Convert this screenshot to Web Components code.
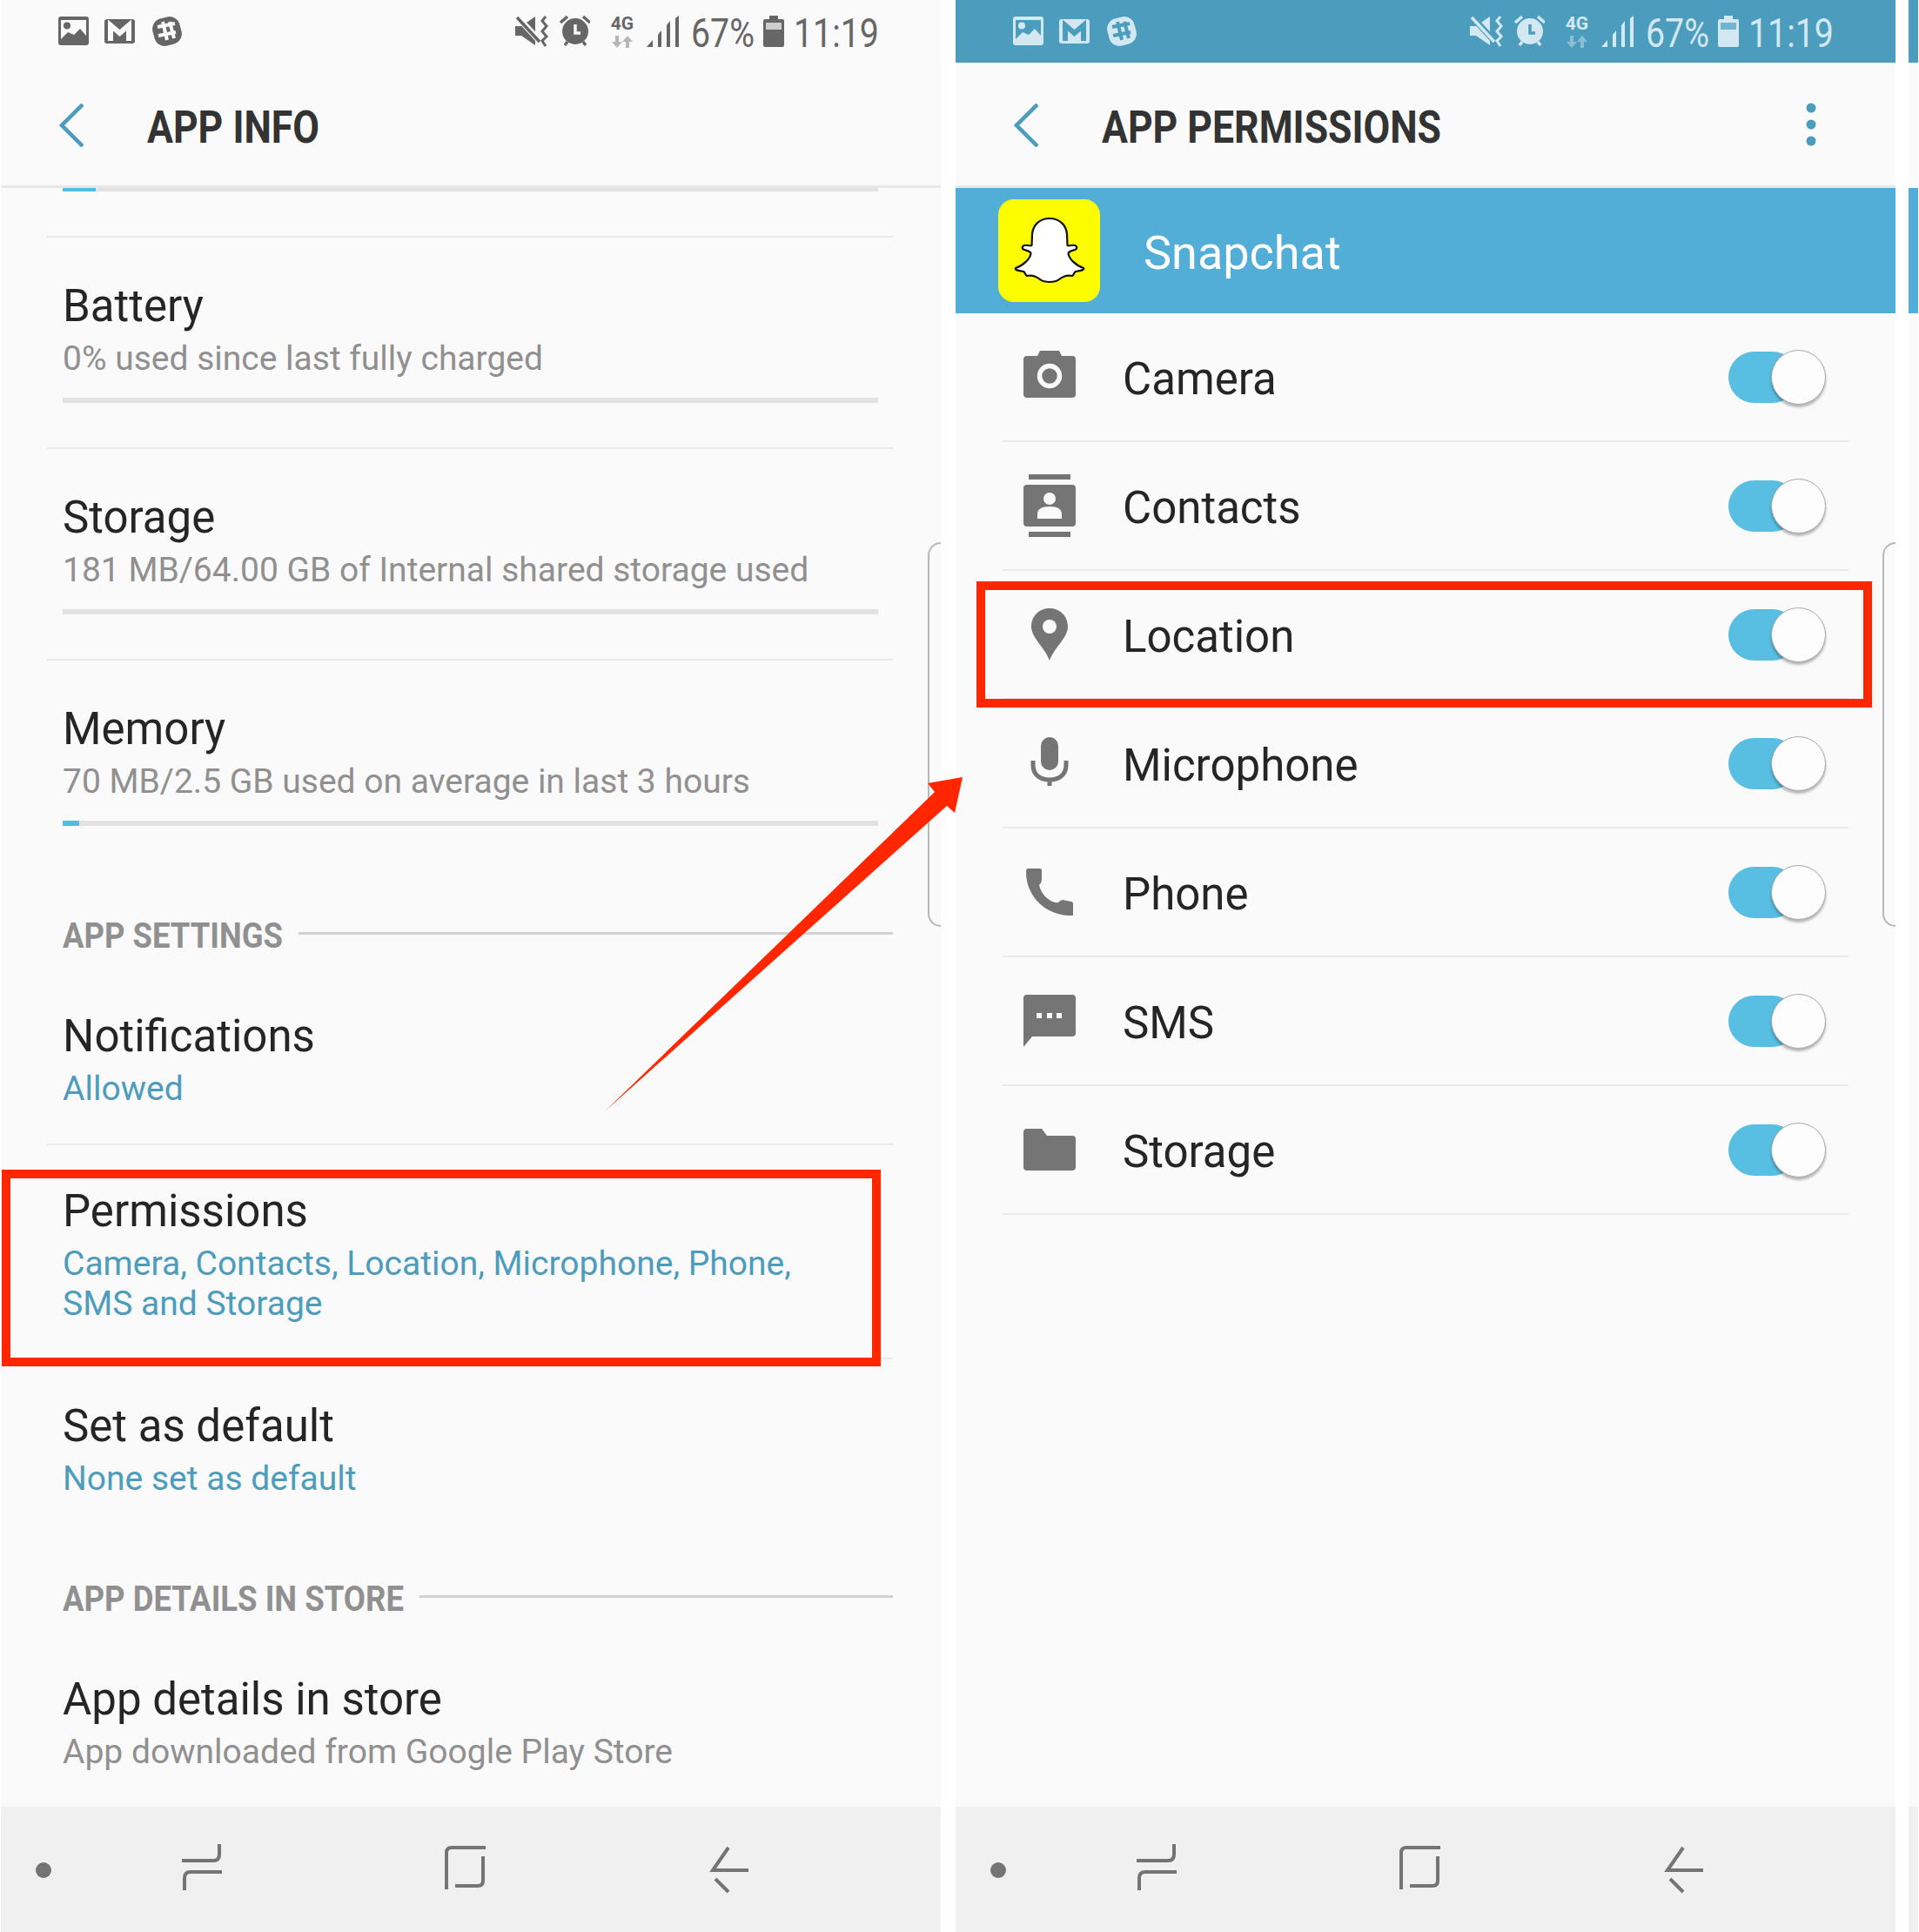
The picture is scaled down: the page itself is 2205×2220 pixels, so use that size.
<!DOCTYPE html>
<html>
<head>
<meta charset="utf-8">
<title>App info</title>
<style>
  html, body { margin: 0; padding: 0; background: #fff; }
  body { width: 2205px; height: 2220px; position: relative; overflow: hidden; font-family: Roboto, "Liberation Sans", sans-serif; }
  .page { display: flex; height: 2220px; }
</style>
</head>
<body>
<div class="page">
  <phone-panel style="margin-left:1px">
    <status-bar slot="status"></status-bar>
    <app-bar slot="bar" label="APP INFO" w="198"></app-bar>
    <setting-row progress="38" pt="0" pb="51" divider></setting-row>
    <setting-row label="Battery" sub="0% used since last fully charged" progress="0" divider></setting-row>
    <setting-row label="Storage" sub="181 MB/64.00 GB of Internal shared storage used" progress="0" divider></setting-row>
    <setting-row label="Memory" sub="70 MB/2.5 GB used on average in last 3 hours" progress="19" pb="101"></setting-row>
    <section-label w="253">APP SETTINGS</section-label>
    <setting-row label="Notifications" sub="Allowed" tone="blue" pt="61" pb="40" divider></setting-row>
    <setting-row label="Permissions" tone="blue" pt="46" pb="39" divider>Camera, Contacts, Location, Microphone, Phone,<br>SMS and Storage</setting-row>
    <setting-row label="Set as default" sub="None set as default" tone="blue" pt="47" pb="90"></setting-row>
    <section-label w="392">APP DETAILS IN STORE</section-label>
    <setting-row label="App details in store" sub="App downloaded from Google Play Store" pt="61" pb="0"></setting-row>
    <nav-bar slot="nav"></nav-bar>
    <edge-handle slot="over"></edge-handle>
  </phone-panel>
  <phone-panel style="margin-left:17px">
    <status-bar slot="status" tone="blue"></status-bar>
    <app-bar slot="bar" label="APP PERMISSIONS" w="390" menu></app-bar>
    <app-header label="Snapchat"></app-header>
    <perm-row icon="camera" label="Camera"></perm-row>
    <perm-row icon="contacts" label="Contacts"></perm-row>
    <perm-row icon="location" label="Location"></perm-row>
    <perm-row icon="mic" label="Microphone"></perm-row>
    <perm-row icon="phone" label="Phone"></perm-row>
    <perm-row icon="sms" label="SMS"></perm-row>
    <perm-row icon="storage" label="Storage"></perm-row>
    <nav-bar slot="nav"></nav-bar>
    <edge-handle slot="over"></edge-handle>
  </phone-panel>
  <peek-strip></peek-strip>
</div>
<red-box x="2" y="1344" w="1010" h="226"></red-box>
<red-box x="1122" y="668" w="1029" h="145"></red-box>
<call-arrow></call-arrow>

<script>
// squeezes a single line of text to a given width (the phone font is condensed)
class FitText extends HTMLElement {
  constructor() {
    super();
    this.attachShadow({ mode: "open" });
    this.shadowRoot.innerHTML = `
      <style>
        :host { display: inline-block; white-space: nowrap; }
        span { display: inline-block; transform-origin: 0 50%; }
      </style>
      <span><slot></slot></span>`;
  }

  connectedCallback() {
    const w = Number(this.getAttribute("w"));
    const span = this.shadowRoot.querySelector("span");
    this.style.width = w + "px";
    const natural = span.getBoundingClientRect().width;
    if (natural > 0) span.style.transform = `scaleX(${w / natural})`;
  }
}

class PhonePanel extends HTMLElement {
  constructor() {
    super();
    this.attachShadow({ mode: "open" });
    this.shadowRoot.innerHTML = `
      <style>
        :host { display: flex; flex-direction: column; width: 1080px; height: 2220px; background: #fafafa; position: relative; flex: none; }
        .body { flex: 1; display: flex; flex-direction: column; min-height: 0; }
      </style>
      <slot name="status"></slot>
      <slot name="bar"></slot>
      <div class="body"><slot></slot></div>
      <slot name="nav"></slot>
      <slot name="over"></slot>`;
  }
}

class StatusBar extends HTMLElement {
  constructor() {
    super();
    this.attachShadow({ mode: "open" });
    this.shadowRoot.innerHTML = `
      <style>
        :host { display: flex; height: 72px; color: #666; --sb: #fafafa; background: var(--sb); padding: 0 71px 0 66px; align-items: flex-start; }
        :host([tone="blue"]) { color: #d3e8f1; --sb: #4c9dbd; }
        svg { display: block; height: 72px; flex: none; fill: currentColor; }
        .right { margin-left: auto; display: flex; }
        .pct, .time { font: 400 46px/72px Roboto, sans-serif; height: 72px; margin-top: 2px; }
        .net { width: 28px; height: 72px; position: relative; margin: 0 14px 0 23px; flex: none; }
        .net b { display: block; font: 700 21px/21px Roboto, sans-serif; padding-top: 17px; text-align: center; }
      </style>
      <svg width="36" viewBox="0 0 36 72" style="margin-right:17px">
        <rect x="0" y="19" width="35" height="33" rx="3"/>
        <path d="M3 23H32V41L25 33L18 40L11 37L3 45Z" style="fill:var(--sb)"/>
        <circle cx="10" cy="29.500" r="4"/>
      </svg>
      <svg width="36" viewBox="0 0 36 72" style="margin-right:17px">
        <rect x="0" y="22" width="35" height="28" rx="3"/>
        <path d="M7 47V29L17.500 38L28 29V47" style="fill:none;stroke:var(--sb);stroke-width:6"/>
      </svg>
      <svg width="38" viewBox="0 0 38 72">
        <rect x="3" y="20" width="32" height="32" rx="12" transform="rotate(-15 19 36)"/>
        <path d="M15 25L20 46M23 25L28 44M9 31L29 27M10 41L30 37" transform="translate(-1 0)" style="fill:none;stroke:var(--sb);stroke-width:4"/>
      </svg>
      <div class="right">
        <svg width="38" viewBox="0 0 38 72" style="margin-right:12px">
          <path d="M0 30H7L23 19V52L7 41H0Z"/>
          <path d="M2 19L28 47" style="fill:none;stroke:var(--sb);stroke-width:7"/>
          <path d="M2 20L28 48" style="fill:none;stroke:currentColor;stroke-width:3.500"/>
          <path d="M35 19L31 24L36 30L31 36L36 42L31 47L35 53" style="fill:none;stroke:currentColor;stroke-width:3"/>
        </svg>
        <svg width="36" viewBox="0 0 36 72">
          <circle cx="19" cy="36" r="15"/>
          <path d="M2 26L10 19M36 26L28 19M7 52L10 48M31 52L28 48" style="fill:none;stroke:currentColor;stroke-width:3.500"/>
          <path d="M19 28V38H25" style="fill:none;stroke:var(--sb);stroke-width:3.500"/>
        </svg>
        <div class="net"><b>4G</b>
          <svg width="28" height="14" viewBox="0 0 28 14" style="position:absolute;left:0;top:41px;height:14px;opacity:.45">
            <path d="M6 0H10V7H14L8 14L2 7H6ZM18 14H22V7H26L20 0L14 7H18Z"/>
          </svg>
        </div>
        <svg width="37" viewBox="0 0 37 72" style="margin-right:14px">
          <path d="M0 54L7 46V54ZM13 40L17 35V54H13ZM23 29L27 24V54H23ZM33 21L37 18V54H33Z"/>
        </svg>
        <fit-text class="pct" w="73">67%</fit-text>
        <svg width="24" viewBox="0 0 24 72" style="margin:0 11px 0 10px">
          <path d="M7 18H17V22H22Q24 22 24 24V52Q24 54 22 54H2Q0 54 0 52V24Q0 22 2 22H7Z"/>
          <rect x="3" y="26" width="18" height="8" style="fill:var(--sb);opacity:.7"/>
        </svg>
        <fit-text class="time" w="98">11:19</fit-text>
      </div>`;
  }
}

class AppBar extends HTMLElement {
  constructor() {
    super();
    this.attachShadow({ mode: "open" });
  }

  connectedCallback() {
    const menu = this.hasAttribute("menu") ? `
      <svg class="menu" width="14" height="52" viewBox="0 0 14 52">
        <circle cx="7" cy="6" r="5.500"/><circle cx="7" cy="25" r="5.500"/><circle cx="7" cy="44" r="5.500"/>
      </svg>` : "";
    this.shadowRoot.innerHTML = `
      <style>
        :host { display: flex; align-items: center; height: 141px; padding-left: 67px; padding-right: 90px; border-bottom: 3px solid #e8e8e8; background: #fafafa; color: #333; }
        svg { flex: none; display: block; }
        .back { fill: none; stroke: #4c9dbd; stroke-width: 4.500; margin-right: 73px; margin-top: 2px; }
        .title { font: 700 51px/60px Roboto, sans-serif; margin-top: 8px; }
        .menu { margin-left: auto; fill: #4c9dbd; margin-top: 3px; }
      </style>
      <svg class="back" width="28" height="50" viewBox="0 0 28 50"><path d="M27 1L3 25L27 49"/></svg>
      <fit-text class="title" w="${this.getAttribute("w")}">${this.getAttribute("label")}</fit-text>
      ${menu}`;
  }
}

class SettingRow extends HTMLElement {
  constructor() {
    super();
    this.attachShadow({ mode: "open" });
  }

  connectedCallback() {
    const label = this.getAttribute("label");
    const sub = this.getAttribute("sub");
    const progress = this.getAttribute("progress");
    const pt = this.getAttribute("pt") || 49;
    const pb = this.getAttribute("pb") || 51;
    this.shadowRoot.innerHTML = `
      <style>
        :host { display: block; margin: 0 55px 0 53px; padding: ${pt}px 17px ${pb}px 18px; flex: none; }
        :host([divider]) { border-bottom: 2px solid #e9e9e9; }
        .t { font: 400 51px/60px Roboto, sans-serif; color: #252525; }
        .s { font: 400 39px/46px Roboto, sans-serif; color: #909090; margin-top: 7px; }
        :host([tone="blue"]) .s { color: #4c9dbd; }
        .bar { height: 6px; background: #e2e2e2; margin-top: 22px; }
        .bar.only { margin-top: 0; height: 4px; }
        .bar i { display: block; height: 100%; background: #53bde1; }
      </style>
      ${label ? `<div class="t">${label}</div>` : ""}
      ${label ? `<div class="s">${sub || "<slot></slot>"}</div>` : ""}
      ${progress !== null ? `<div class="bar ${label ? "" : "only"}"><i style="width:${progress}px"></i></div>` : ""}`;
  }
}

class SectionLabel extends HTMLElement {
  constructor() {
    super();
    this.attachShadow({ mode: "open" });
  }

  connectedCallback() {
    this.shadowRoot.innerHTML = `
      <style>
        :host { display: flex; align-items: center; height: 50px; margin: 0 55px 0 53px; padding-left: 18px; flex: none; color: #909090; }
        fit-text { font: 700 40px/50px Roboto, sans-serif; flex: none; margin-top: 2px; }
        div { flex: 1; height: 3px; background: #d2d2d2; margin: 0 0 5px 18px; }
      </style>
      <fit-text w="${this.getAttribute("w")}"><slot></slot></fit-text>
      <div></div>`;
  }
}

class AppHeader extends HTMLElement {
  constructor() {
    super();
    this.attachShadow({ mode: "open" });
  }

  connectedCallback() {
    this.shadowRoot.innerHTML = `
      <style>
        :host { display: flex; align-items: center; height: 144px; background: #52aed6; padding-left: 49px; flex: none; }
        .tile { width: 117px; height: 118px; border-radius: 18px; background: #fdfd00; flex: none; }
        svg { display: block; }
        span { font: 400 54px/64px Roboto, sans-serif; color: #fff; margin-left: 50px; margin-top: 6px; }
      </style>
      <div class="tile">
        <svg width="117" height="118" viewBox="7 4 117 118">
          <path fill="#fff" stroke="#111" stroke-width="2.200" stroke-linejoin="round"
            d="M66 26C55 26 47 33 46 44L45.500 57C43 58 40 56 37 57C34 58 34 61 37 62C40 63 44 64 44.500 66C44 72 36 80 27 83C26 85 29 86 36 87C38 88 38 91 40 92C44 91 50 92 55 96C60 100 72 100 77 96C82 92 88 91 92 92C94 91 94 88 96 87C103 86 106 85 105 83C96 80 88 72 87.500 66C88 64 92 63 95 62C98 61 98 58 95 57C92 56 89 58 86.500 57L86 44C85 33 77 26 66 26Z"/>
        </svg>
      </div>
      <span>${this.getAttribute("label")}</span>`;
  }
}

const PERM_ICONS = {
  camera: `<path d="M10 12H22L25 6H47L50 12H62Q66 12 66 16V56Q66 60 62 60H10Q6 60 6 56V16Q6 12 10 12Z"/>
    <circle cx="36" cy="35" r="11.500" fill="none" stroke="#fafafa" stroke-width="5.500"/>`,
  contacts: `<rect x="12" y="0" width="48" height="6"/><rect x="12" y="66" width="48" height="6"/>
    <rect x="6" y="12" width="60" height="48" rx="4"/>
    <circle cx="36" cy="28" r="7" fill="#fafafa"/>
    <path d="M22 51V46Q22 37 36 37Q50 37 50 46V51Z" fill="#fafafa"/>`,
  location: `<path d="M36 66C30 50 15 40 15 27C15 14 25 6 36 6C47 6 57 14 57 27C57 40 42 50 36 66Z"/>
    <circle cx="36" cy="27" r="8" fill="#fafafa"/>`,
  mic: `<rect x="26" y="6" width="20" height="38" rx="10"/>
    <path d="M17 33V38C17 50 26 55 36 55C46 55 55 50 55 38V33M36 55V62" fill="none" stroke="#757575" stroke-width="5"/>`,
  phone: `<path d="M11 9H25Q27 9 27 12V22Q27 25 24 28Q26 37 33 43Q40 49 46 48Q49 45 51 45L61 47Q63 47 63 50V63Q62 63 58 63C30 62 9 40 9 13Q9 9 11 9Z"/>`,
  sms: `<path d="M10 6H62Q66 6 66 10V50Q66 54 62 54H16L6 66V10Q6 6 10 6Z"/>
    <rect x="21" y="27" width="6" height="6" fill="#fafafa"/><rect x="33" y="27" width="6" height="6" fill="#fafafa"/><rect x="44" y="27" width="6" height="6" fill="#fafafa"/>`,
  storage: `<path d="M10 12H27L33 20H62Q66 20 66 24V56Q66 60 62 60H10Q6 60 6 56V16Q6 12 10 12Z"/>`
};

class PermRow extends HTMLElement {
  constructor() {
    super();
    this.attachShadow({ mode: "open" });
  }

  connectedCallback() {
    this.shadowRoot.innerHTML = `
      <style>
        :host { display: flex; align-items: center; height: 146px; margin: 0 54px 0 54px; padding: 0 26px 0 18px; border-bottom: 2px solid #e9e9e9; flex: none; }
        svg { flex: none; fill: #757575; display: block; }
        span { font: 400 51px/60px Roboto, sans-serif; color: #252525; margin-left: 48px; flex: 1; margin-top: 6px; }
      </style>
      <svg width="72" height="72" viewBox="0 0 72 72">${PERM_ICONS[this.getAttribute("icon")]}</svg>
      <span>${this.getAttribute("label")}</span>
      <toggle-switch></toggle-switch>`;
  }
}

class ToggleSwitch extends HTMLElement {
  constructor() {
    super();
    this.attachShadow({ mode: "open" });
    this.shadowRoot.innerHTML = `
      <style>
        :host { display: block; width: 112px; height: 63px; position: relative; flex: none; }
        .track { position: absolute; left: 0; top: 2px; width: 80px; height: 59px; border-radius: 30px; background: #58bfe3; }
        .knob { position: absolute; right: 0; top: 0; width: 63px; height: 63px; box-sizing: border-box; border-radius: 50%; background: #fdfdfd; border: 1px solid #a8a8a8; box-shadow: 0 3px 3px rgba(0,0,0,.28); }
      </style>
      <div class="track"></div><div class="knob"></div>`;
  }
}

class NavBar extends HTMLElement {
  constructor() {
    super();
    this.attachShadow({ mode: "open" });
    this.shadowRoot.innerHTML = `
      <style>
        :host { display: flex; align-items: center; height: 142px; padding-top: 2px; background: #f0f0f0; padding-left: 39px; flex: none; }
        svg { flex: none; display: block; fill: none; stroke: #747474; }
      </style>
      <svg width="20" height="20" viewBox="0 0 20 20" style="margin-right:145px"><circle cx="10" cy="10" r="9" fill="#747474" stroke="none"/></svg>
      <svg width="54" height="60" viewBox="0 0 54 60" style="margin-right:247px">
        <path d="M47 0V12Q47 19 40 19H4" stroke-width="4"/>
        <path d="M50 32H14Q7 32 7 39V53" stroke-width="4"/>
      </svg>
      <svg width="56" height="60" viewBox="0 0 56 60" style="margin-right:248px">
        <path d="M52 4H13Q7 4 7 10V52" stroke-width="4"/>
        <path d="M49 14V42Q49 48 43 48H17" stroke-width="4"/>
      </svg>
      <svg width="54" height="60" viewBox="0 0 54 60">
        <path d="M50 30H9L27 4M12 40L27 55" stroke-width="4"/>
      </svg>`;
  }
}

class EdgeHandle extends HTMLElement {
  constructor() {
    super();
    this.attachShadow({ mode: "open" });
    this.shadowRoot.innerHTML = `
      <style>
        :host { display: block; position: absolute; right: 0; top: 623px; width: 15px; height: 442px; box-sizing: border-box; border: 2px solid #b8b8b8; border-right: 0; border-radius: 16px 0 0 16px; }
      </style>`;
  }
}

class PeekStrip extends HTMLElement {
  constructor() {
    super();
    this.attachShadow({ mode: "open" });
    this.shadowRoot.innerHTML = `
      <style>
        :host { display: flex; flex-direction: column; width: 11px; margin-left: 15px; background: #fafafa; flex: none; }
        .a { height: 72px; background: #4c9dbd; }
        .b { height: 144px; background: #52aed6; }
        .gap { height: 144px; }
        .fill { flex: 1; }
        .nav { height: 144px; background: #f0f0f0; }
      </style>
      <div class="a"></div><div class="gap"></div><div class="b"></div><div class="fill"></div><div class="nav"></div>`;
  }
}

class RedBox extends HTMLElement {
  constructor() {
    super();
    this.attachShadow({ mode: "open" });
  }

  connectedCallback() {
    const [x, y, w, h] = ["x", "y", "w", "h"].map((n) => this.getAttribute(n));
    this.shadowRoot.innerHTML = `
      <style>
        :host { display: block; position: absolute; left: ${x}px; top: ${y}px; width: ${w}px; height: ${h}px; box-sizing: border-box; border: 10px solid #ff2600; }
      </style>`;
  }
}

class CallArrow extends HTMLElement {
  constructor() {
    super();
    this.attachShadow({ mode: "open" });
    this.shadowRoot.innerHTML = `
      <style>
        :host { display: block; position: absolute; left: 0; top: 0; pointer-events: none; }
        svg { display: block; }
      </style>
      <svg width="2205" height="2220" viewBox="0 0 2205 2220">
        <polygon fill="#ff2600" points="695,1277 1074,910 1066,900 1106,893 1097,934 1088,926"/>
      </svg>`;
  }
}

customElements.define("fit-text", FitText);
customElements.define("phone-panel", PhonePanel);
customElements.define("status-bar", StatusBar);
customElements.define("app-bar", AppBar);
customElements.define("setting-row", SettingRow);
customElements.define("section-label", SectionLabel);
customElements.define("app-header", AppHeader);
customElements.define("perm-row", PermRow);
customElements.define("toggle-switch", ToggleSwitch);
customElements.define("nav-bar", NavBar);
customElements.define("edge-handle", EdgeHandle);
customElements.define("peek-strip", PeekStrip);
customElements.define("red-box", RedBox);
customElements.define("call-arrow", CallArrow);
</script>
</body>
</html>
